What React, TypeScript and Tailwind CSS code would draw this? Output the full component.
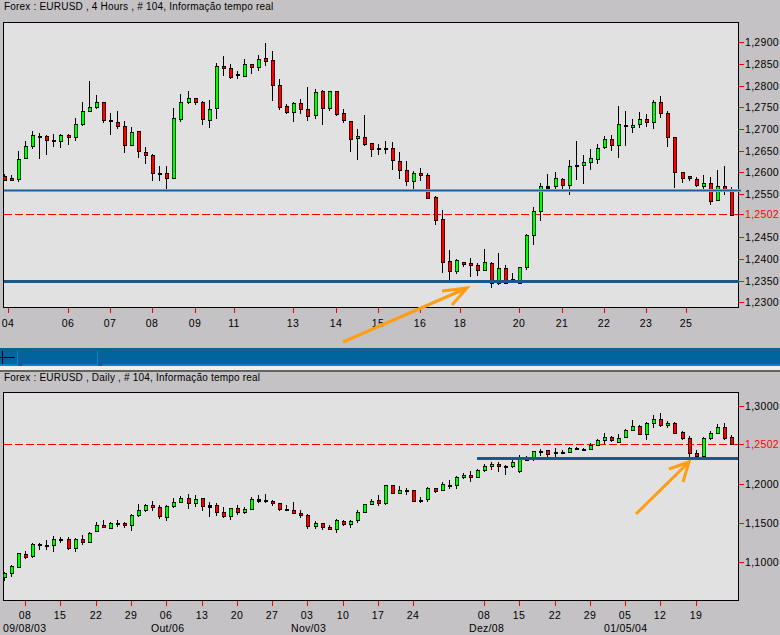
type Candle = [number, number, number, number, 'r' | 'g' | 'k'];

const xsLeft = [15, 36, 57, 78, 99, 120, 141, 162, 183, 207, 228, 249, 270, 291, 312, 333, 354, 375, 396, 417, 438, 459, 480, 501, 522, 543, 567, 588, 609, 630, 651, 672, 693, 714, 735, 756, 777, 798, 819, 840, 861, 882, 903, 924, 948, 969, 990, 1011, 1032, 1053, 1074, 1095, 1116, 1137, 1158];
const xsRight = [9, 30, 51, 72, 93, 114, 138, 159, 180, 201, 222, 243, 264, 285, 306, 327, 348, 369, 390, 411, 432, 453, 474, 498, 519, 540, 561, 582, 603, 624, 645, 666, 687, 708, 729, 750, 771, 792, 813, 834, 855, 879, 900, 921, 942, 963, 984, 1005, 1026];
// candle x in page pixels, read off the 3x crops
const candleX = [...xsLeft.map((x) => Math.round(x / 3)), ...xsRight.map((x) => 390 + Math.round(x / 3))];

// high, body top, body bottom, low (3x crop units)
const fourHours: Candle[] = [
  [522, 529, 541, 543, 'r'], [526, 535, 541, 543, 'r'], [454, 478, 538, 545, 'g'], [423, 439, 475, 477, 'g'],
  [393, 406, 439, 446, 'g'], [400, 409, 411, 476, 'k'], [405, 409, 421, 465, 'r'], [403, 421, 423, 441, 'k'],
  [403, 406, 424, 443, 'g'], [403, 406, 412, 435, 'r'], [354, 373, 412, 423, 'g'], [306, 334, 373, 377, 'g'],
  [243, 322, 334, 336, 'g'], [285, 307, 322, 326, 'g'], [307, 307, 361, 368, 'r'], [339, 361, 364, 405, 'k'],
  [333, 367, 379, 386, 'r'], [363, 379, 436, 459, 'r'], [381, 397, 436, 438, 'g'], [394, 394, 454, 474, 'r'],
  [441, 457, 466, 492, 'r'], [462, 466, 520, 543, 'r'], [498, 520, 523, 543, 'k'], [498, 520, 535, 570, 'r'],
  [324, 355, 535, 538, 'g'], [282, 307, 358, 366, 'g'], [273, 295, 307, 312, 'g'], [295, 295, 307, 315, 'r'],
  [304, 307, 358, 375, 'r'], [300, 328, 361, 384, 'g'], [190, 199, 325, 357, 'g'], [168, 199, 205, 228, 'r'],
  [192, 205, 232, 236, 'r'], [213, 222, 224, 237, 'k'], [177, 193, 229, 231, 'g'], [192, 193, 202, 222, 'r'],
  [165, 178, 202, 213, 'g'], [129, 175, 184, 198, 'r'], [153, 181, 256, 303, 'r'], [237, 256, 322, 330, 'r'],
  [312, 319, 337, 341, 'r'], [306, 310, 337, 366, 'g'], [297, 310, 328, 342, 'r'], [262, 328, 349, 363, 'r'],
  [267, 277, 346, 357, 'g'], [271, 274, 325, 375, 'r'], [273, 274, 325, 332, 'g'], [274, 274, 343, 348, 'r'],
  [327, 340, 361, 369, 'r'], [364, 364, 418, 456, 'r'], [387, 409, 415, 480, 'g'], [346, 412, 433, 437, 'r'],
  [430, 430, 448, 471, 'r'], [433, 445, 448, 465, 'k'], [423, 445, 448, 463, 'k'],
  [427, 445, 481, 509, 'r'], [457, 484, 511, 536, 'r'], [484, 511, 544, 558, 'r'], [514, 520, 544, 570, 'g'],
  [504, 520, 526, 543, 'r'], [519, 526, 595, 598, 'r'], [588, 591, 659, 674, 'r'], [630, 658, 785, 819, 'r'],
  [750, 784, 814, 846, 'r'], [778, 781, 814, 821, 'g'], [786, 787, 793, 800, 'r'], [774, 790, 796, 830, 'r'],
  [790, 796, 811, 828, 'r'], [747, 787, 811, 814, 'g'], [787, 790, 850, 863, 'r'], [759, 805, 850, 855, 'g'],
  [796, 805, 850, 852, 'r'], [820, 838, 845, 848, 'g'], [802, 802, 848, 850, 'g'], [703, 706, 802, 811, 'g'],
  [621, 634, 706, 734, 'g'], [550, 559, 634, 662, 'g'], [522, 559, 564, 570, 'k'], [517, 535, 559, 567, 'g'],
  [535, 538, 556, 567, 'r'], [480, 499, 556, 585, 'g'], [423, 496, 499, 540, 'k'], [465, 487, 496, 552, 'g'],
  [447, 475, 487, 510, 'g'], [433, 445, 478, 492, 'g'], [409, 418, 442, 447, 'g'], [405, 418, 436, 453, 'r'],
  [318, 373, 436, 474, 'g'], [333, 376, 379, 438, 'k'], [358, 376, 382, 399, 'g'], [336, 358, 373, 384, 'g'],
  [343, 358, 367, 381, 'r'], [300, 307, 367, 387, 'g'], [288, 307, 340, 354, 'r'], [333, 340, 412, 441, 'r'],
  [412, 412, 517, 564, 'r'], [517, 517, 535, 549, 'r'], [529, 529, 535, 542, 'r'], [532, 538, 556, 560, 'r'],
  [526, 550, 559, 570, 'g'], [531, 550, 604, 614, 'r'], [511, 559, 601, 603, 'g'], [498, 559, 571, 585, 'r'],
  [562, 568, 644, 648, 'r'],
];

const dailyLeft: Candle[] = [
  [440, 445, 455, 467, 'g'], [420, 424, 445, 456, 'g'], [385, 385, 425, 428, 'g'], [379, 388, 395, 401, 'r'],
  [355, 358, 394, 398, 'g'], [355, 358, 361, 375, 'k'], [346, 360, 362, 375, 'k'], [334, 343, 361, 381, 'g'],
  [337, 342, 344, 353, 'k'], [337, 343, 370, 374, 'r'], [340, 343, 370, 381, 'g'], [331, 343, 352, 359, 'r'],
  [322, 325, 352, 355, 'g'], [292, 301, 319, 322, 'g'], [286, 301, 307, 309, 'r'], [292, 295, 308, 311, 'g'],
  [286, 295, 297, 305, 'k'], [292, 295, 301, 308, 'r'], [268, 271, 301, 318, 'g'], [238, 256, 271, 277, 'g'],
  [238, 241, 256, 261, 'g'], [229, 241, 247, 258, 'r'], [241, 247, 274, 282, 'r'], [240, 244, 277, 288, 'g'],
  [220, 232, 244, 248, 'g'], [214, 220, 232, 234, 'g'], [208, 220, 235, 252, 'r'], [211, 223, 235, 246, 'g'],
  [220, 220, 244, 258, 'r'], [232, 241, 245, 276, 'k'], [235, 241, 262, 272, 'r'], [247, 262, 274, 279, 'r'],
  [250, 250, 274, 285, 'g'], [241, 250, 262, 270, 'r'], [247, 253, 262, 266, 'g'], [216, 223, 253, 256, 'g'],
  [210, 223, 227, 233, 'k'], [207, 225, 227, 233, 'k'], [226, 229, 235, 242, 'r'], [235, 235, 253, 258, 'r'],
  [241, 253, 256, 258, 'k'], [232, 256, 265, 267, 'r'], [256, 265, 271, 278, 'r'], [266, 271, 304, 311, 'r'],
  [289, 295, 304, 312, 'g'], [295, 295, 307, 314, 'r'], [300, 307, 313, 316, 'r'], [283, 286, 313, 324, 'g'],
  [286, 289, 298, 303, 'r'], [286, 289, 298, 309, 'g'], [256, 262, 286, 293, 'g'], [238, 238, 262, 264, 'g'],
  [223, 229, 238, 241, 'g'], [211, 226, 235, 243, 'r'], [181, 181, 235, 239, 'g'],
];

const dailyRight: Candle[] = [
  [300, 301, 325, 327, 'r'], [304, 316, 325, 328, 'g'], [310, 314, 316, 330, 'k'], [316, 316, 349, 352, 'r'],
  [337, 346, 349, 353, 'k'], [307, 310, 343, 350, 'g'], [310, 310, 319, 323, 'r'], [292, 298, 316, 319, 'g'],
  [286, 299, 301, 311, 'k'], [274, 277, 301, 312, 'g'], [265, 271, 277, 281, 'g'], [259, 271, 277, 290, 'r'],
  [253, 256, 277, 280, 'g'], [238, 244, 256, 260, 'g'], [232, 238, 244, 254, 'g'], [232, 238, 244, 260, 'r'],
  [240, 242, 244, 269, 'k'], [225, 232, 244, 248, 'g'], [211, 223, 259, 265, 'g'], [212, 221, 223, 228, 'k'],
  [197, 199, 223, 228, 'g'], [193, 197, 199, 212, 'k'], [196, 196, 208, 216, 'r'], [190, 202, 204, 216, 'k'],
  [196, 200, 202, 207, 'k'], [187, 190, 202, 204, 'g'], [187, 190, 192, 195, 'k'], [190, 193, 195, 197, 'k'],
  [175, 181, 193, 196, 'g'], [163, 166, 181, 184, 'g'], [145, 157, 166, 178, 'g'], [154, 157, 166, 172, 'r'],
  [148, 160, 170, 172, 'g'], [133, 136, 157, 160, 'g'], [105, 124, 136, 139, 'g'], [121, 124, 148, 150, 'r'],
  [112, 115, 148, 164, 'g'], [91, 103, 115, 130, 'g'], [85, 103, 121, 126, 'r'], [109, 115, 121, 130, 'g'],
  [112, 115, 145, 148, 'r'], [139, 142, 160, 164, 'r'], [154, 160, 203, 215, 'r'], [196, 205, 214, 216, 'r'],
  [157, 160, 214, 216, 'g'], [139, 145, 160, 166, 'g'], [118, 127, 145, 148, 'g'], [115, 127, 160, 164, 'r'],
  [151, 157, 178, 181, 'r'],
];

const fill = { r: '#ff0000', g: '#00ff00', k: '#000000' };

function Candles({ left, right, leftTop, rightTop }: { left: Candle[]; right: Candle[]; leftTop: number; rightTop: number }) {
  const all = [...left.map((c) => [c, leftTop] as const), ...right.map((c) => [c, rightTop] as const)];
  return (
    <g shapeRendering="auto">
      {all.map(([[hi, top, bot, lo, color], offset], i) => {
        const cx = candleX[i];
        const yHi = offset + Math.round(hi / 3);
        const yLo = offset + Math.round(lo / 3);
        const yTop = offset + Math.round(top / 3);
        const yBot = Math.max(offset + Math.round(bot / 3), yTop + 1);
        return (
          <g key={i}>
            <rect x={cx - 1} y={yHi} width={1} height={yLo - yHi} fill="#000" />
            <rect x={cx - 2} y={yTop} width={4} height={yBot - yTop + 1} fill="#000" />
            {/* the reference is slightly soft, so the body fill reads a bit wider than 2px */}
            {yBot - yTop > 1 && <rect x={cx - 1.3} y={yTop + 0.9} width={2.6} height={yBot - yTop - 0.8} fill={fill[color]} />}
          </g>
        );
      })}
    </g>
  );
}

function Plot({
  top,
  bottom,
  labelY,
  prices,
  priceY,
  times,
}: {
  top: number;
  bottom: number;
  labelY: number;
  prices: [string, number][];
  priceY: number;
  times: [string, number][];
}) {
  return (
    <>
      <rect x={3.5} y={top + 0.5} width={735} height={bottom - top} fill="#e1e1e1" stroke="#000" />
      {prices.map(([label, y]) => (
        <g key={label}>
          <rect x={739} y={y} width={5} height={1} fill="#ff0000" />
          <text x={745} y={y + 4} fontSize={10.5} letterSpacing={0.3} fill="#000">{label}</text>
        </g>
      ))}
      <rect x={739} y={priceY} width={5} height={1} fill="#ff0000" />
      <text x={745} y={priceY + 4} fontSize={10.5} letterSpacing={0.3} fill="#ff0000">1,2502</text>
      <line x1={4} x2={738} y1={priceY + 0.5} y2={priceY + 0.5} stroke="#ff0000" strokeDasharray="8 3" />
      {times.map(([label, x], i) => (
        <g key={i}>
          <rect x={x} y={bottom + 1} width={1} height={5} fill="#ff0000" />
          <text x={x} y={labelY} textAnchor="middle" fontSize={10.5} letterSpacing={0.3} fill="#000">{label}</text>
        </g>
      ))}
    </>
  );
}

function Arrow({ d }: { d: string }) {
  return <path d={d} fill="none" stroke="#ff9d14" strokeWidth={3} />;
}

function Title({ children, className }: { children: string; className: string }) {
  return <div className={`pl-1 text-[10px] leading-none tracking-[0.2px] text-black ${className}`}>{children}</div>;
}

function BandCell({ className, children }: { className: string; children?: React.ReactNode }) {
  return <div className={`h-[16px] border-b-2 border-b-[#0a84c8] ${className}`}>{children}</div>;
}

const chartFont = { fontFamily: '"Liberation Sans", Arial, sans-serif' };

export default function App() {
  return (
    <div className="flex h-[635px] w-[780px] flex-col overflow-hidden bg-[#c4c2c4] font-['Liberation_Sans',Arial,sans-serif]">
      <Title className="h-[22px] pt-[2px]">Forex : EURUSD , 4 Hours , # 104, Informação tempo real</Title>
      <svg className="block h-[326px] w-[780px] shrink-0" viewBox="0 22 780 326" style={chartFont} shapeRendering="crispEdges">
        <Plot
          top={22}
          bottom={307}
          labelY={327}
          priceY={214}
          prices={[
            ['1,2900', 42], ['1,2850', 64], ['1,2800', 86], ['1,2750', 107], ['1,2700', 129], ['1,2650', 151],
            ['1,2600', 172], ['1,2550', 194], ['1,2450', 237], ['1,2400', 259], ['1,2350', 281], ['1,2300', 302],
          ]}
          times={[
            ['04', 8], ['06', 68], ['07', 110], ['08', 152], ['09', 195], ['11', 234], ['13', 293], ['14', 336],
            ['15', 378], ['16', 420], ['18', 460], ['20', 519], ['21', 562], ['22', 604], ['23', 646], ['25', 686],
          ]}
        />
        <Candles left={fourHours.slice(0, 55)} right={fourHours.slice(55)} leftTop={0} rightTop={0} />
        <rect x={4} y={189} width={737} height={3} fill="#7ba0c4" />
        <rect x={4} y={190} width={737} height={1} fill="#1f5c96" />
        <rect x={4} y={280} width={735} height={3} fill="#19598f" />
        <g shapeRendering="auto">
          <Arrow d="M343 342 L467 288 M442 291 L467 288 L452 305" />
        </g>
      </svg>

      <div className="flex h-[18px] shrink-0 gap-1 border-t-2 border-t-[#00659c] bg-[#00659c]">
        <BandCell className="w-[18px] border-t border-r border-t-[#1b5a82] border-r-[#0a84c8]">
          <svg className="block" width="17" height="13" viewBox="0 0 17 13" shapeRendering="crispEdges">
            <rect x="2" y="0" width="1" height="13" fill="#000" />
            <rect x="0" y="6" width="15" height="1" fill="#000" />
          </svg>
        </BandCell>
        <BandCell className="w-[76px] border-t border-r border-l border-t-[#1b5a82] border-r-[#0a84c8] border-l-[#1b5a82]" />
        <BandCell className="flex-1 border-t border-l border-t-[#1b5a82] border-l-[#1b5a82]" />
      </div>
      <div className="h-[6px] shrink-0 border-b-[2px] border-b-[#636363] bg-[#f1efe9]" />

      <Title className="h-[20px] pt-[1px]">Forex : EURUSD , Daily , # 104, Informação tempo real</Title>
      <svg className="block h-[243px] w-[780px] shrink-0" viewBox="0 392 780 243" style={chartFont} shapeRendering="crispEdges">
        <Plot
          top={392}
          bottom={600}
          labelY={619}
          priceY={444}
          prices={[['1,3000', 406], ['1,2000', 484], ['1,1500', 523], ['1,1000', 562]]}
          times={[
            ['08', 25], ['15', 60], ['22', 96], ['29', 131], ['06', 166], ['13', 202], ['20', 237], ['27', 272],
            ['03', 307], ['10', 343], ['17', 378], ['24', 413], ['08', 484], ['15', 519], ['22', 555], ['29', 590],
            ['05', 625], ['12', 660], ['19', 696],
          ]}
        />
        <Candles left={dailyLeft} right={dailyRight} leftTop={425} rightTop={385} />
        <rect x={477} y={457} width={261} height={3} fill="#19598f" />
        <g fontSize={10.5} letterSpacing={0.3} fill="#000">
          <text x={3} y={632}>09/08/03</text>
          <text x={151} y={632}>Out/06</text>
          <text x={291} y={632}>Nov/03</text>
          <text x={469} y={632}>Dez/08</text>
          <text x={604} y={632}>01/05/04</text>
        </g>
        <g shapeRendering="auto">
          <Arrow d="M636 514 L689 462 M669 469 L689 462 L683 482" />
        </g>
      </svg>
    </div>
  );
}
